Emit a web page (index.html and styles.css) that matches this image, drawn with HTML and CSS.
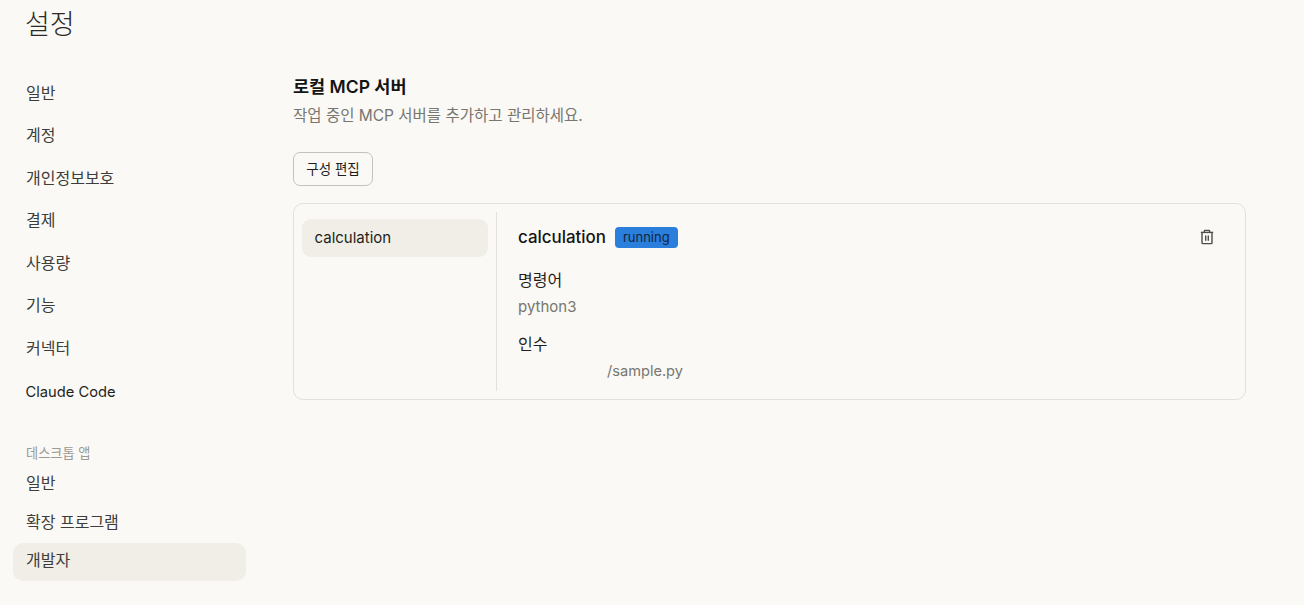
FILE: index.html
```html
<!DOCTYPE html>
<html lang="ko">
<head>
<meta charset="utf-8">
<title>설정</title>
<link rel="stylesheet" href="styles.css">
</head>
<body>
<h1 class="page-title">설정</h1>
<div class="layout">
  <nav class="sidebar">
    <div class="nav-group">
      <a class="nav-item">일반</a>
      <a class="nav-item">계정</a>
      <a class="nav-item nav-hover">개인정보보호</a>
      <a class="nav-item">결제</a>
      <a class="nav-item">사용량</a>
      <a class="nav-item">기능</a>
      <a class="nav-item">커넥터</a>
      <a class="nav-item nav-latin">Claude Code</a>
    </div>
    <div class="nav-label">데스크톱 앱</div>
    <div class="nav-group nav-group-tight">
      <a class="nav-item">일반</a>
      <a class="nav-item">확장 프로그램</a>
      <a class="nav-item nav-active">개발자</a>
    </div>
  </nav>
  <main class="content">
    <h2 class="section-title">로컬 MCP 서버</h2>
    <p class="section-desc">작업 중인 MCP 서버를 추가하고 관리하세요.</p>
    <button class="edit-btn">구성 편집</button>
    <section class="card">
      <div class="server-list">
        <div class="server-item">calculation</div>
      </div>
      <div class="divider"></div>
      <div class="detail">
        <div class="detail-head">
          <span class="detail-name">calculation</span>
          <span class="badge">running</span>
          <svg class="trash" width="16" height="16" viewBox="0 0 16 16" fill="none" stroke="#4f4e49" stroke-width="1.4">
            <path d="M1.8 3.4h12.4"/>
            <path d="M5.4 3.2V1.9c0-.3.2-.5.5-.5h4.2c.3 0 .5.2.5.5v1.3"/>
            <path d="M3 3.4v10.4c0 .5.3.8.8.8h8.4c.5 0 .8-.3.8-.8V3.4"/>
            <path d="M6.7 6.4v5.4M9.3 6.4v5.4"/>
          </svg>
        </div>
        <div class="field-label">명령어</div>
        <div class="field-value">python3</div>
        <div class="field-label field-gap">인수</div>
        <div class="field-value field-indent">/sample.py</div>
      </div>
    </section>
  </main>
</div>
</body>
</html>
```
FILE: styles.css
```css
* { box-sizing: border-box; }
html, body { margin: 0; height: 100%; }
body {
  background: #faf9f5;
  color: #1f1e1c;
  font-family: "Inter", "Noto Sans CJK KR", sans-serif;
  overflow: hidden;
}
.page-title {
  margin: 0;
  padding: 5px 0 0 25px;
  height: 75px;
  font-family: "Noto Sans CJK KR", serif;
  font-size: 27px;
  line-height: 36px;
  font-weight: 300;
  color: #2b2a27;
}
.layout { display: flex; align-items: flex-start; }
.sidebar { width: 233px; margin-left: 13px; flex: none; }
.nav-item {
  display: flex;
  align-items: center;
  height: 38px;
  padding: 0 13px 5px;
  border-radius: 10px;
  font-size: 16px;
  color: #3d3d3a;
}
.nav-group { display: flex; flex-direction: column; gap: 4.5px; }
.nav-group-tight { gap: 0.5px; }
.nav-hover { background: #faf9f6; }
.nav-active { background: #f0eee6; }
.nav-latin { margin-top: 1px; padding-bottom: 2px; padding-left: 12.5px; font-size: 14.7px; color: #1f1e1c; }
.nav-label {
  margin-top: 32px;
  padding-left: 13px;
  height: 22px;
  font-size: 13.2px;
  line-height: 19px;
  color: #9b9a94;
}
.content { margin-left: 47px; width: 953px; padding-top: 1px; }
.section-title {
  margin: 0;
  font-size: 17.5px;
  line-height: 22px;
  font-weight: 600;
  color: #141413;
}
.section-desc {
  margin: 6px 0 0;
  font-size: 15.5px;
  line-height: 24px;
  color: #77766f;
}
.edit-btn {
  display: block;
  margin-top: 24px;
  width: 80px;
  height: 34px;
  padding: 0 0 3px;
  background: #faf9f5;
  border: 1px solid #c4c2ba;
  border-radius: 7px;
  font: inherit;
  font-size: 13.5px;
  color: #1f1e1c;
}
.card {
  display: flex;
  margin-top: 17px;
  height: 197px;
  padding: 8px;
  border: 1px solid #e3e1da;
  border-radius: 10px;
}
.server-list { width: 185.5px; flex: none; padding-top: 7px; }
.server-item {
  height: 38px;
  padding: 0 12.5px;
  background: #f0eee6;
  border-radius: 9px;
  font-size: 15px;
  line-height: 37px;
  color: #1f1e1c;
}
.divider { width: 1px; margin-left: 8.5px; background: #e3e1da; }
.detail { flex: 1; padding-left: 21px; }
.detail-head { display: flex; align-items: center; height: 38px; margin-top: 6px; }
.detail-name { font-size: 16.9px; font-weight: 500; color: #141413; }
.badge {
  margin-left: 9px;
  height: 21px;
  padding: 0 8px;
  background: #2b7fdc;
  border-radius: 4px;
  font-size: 13px;
  line-height: 20px;
  color: #10263f;
}
.trash { margin-left: auto; margin-right: 22px; }
.field-label { margin-top: 12px; font-size: 16px; line-height: 24px; color: #1f1e1c; }
.field-gap { margin-top: 13px; }
.field-value { margin-top: 3px; font-size: 15px; line-height: 24px; color: #77766f; }
.field-indent { padding-left: 89px; font-size: 14.6px; }
```
